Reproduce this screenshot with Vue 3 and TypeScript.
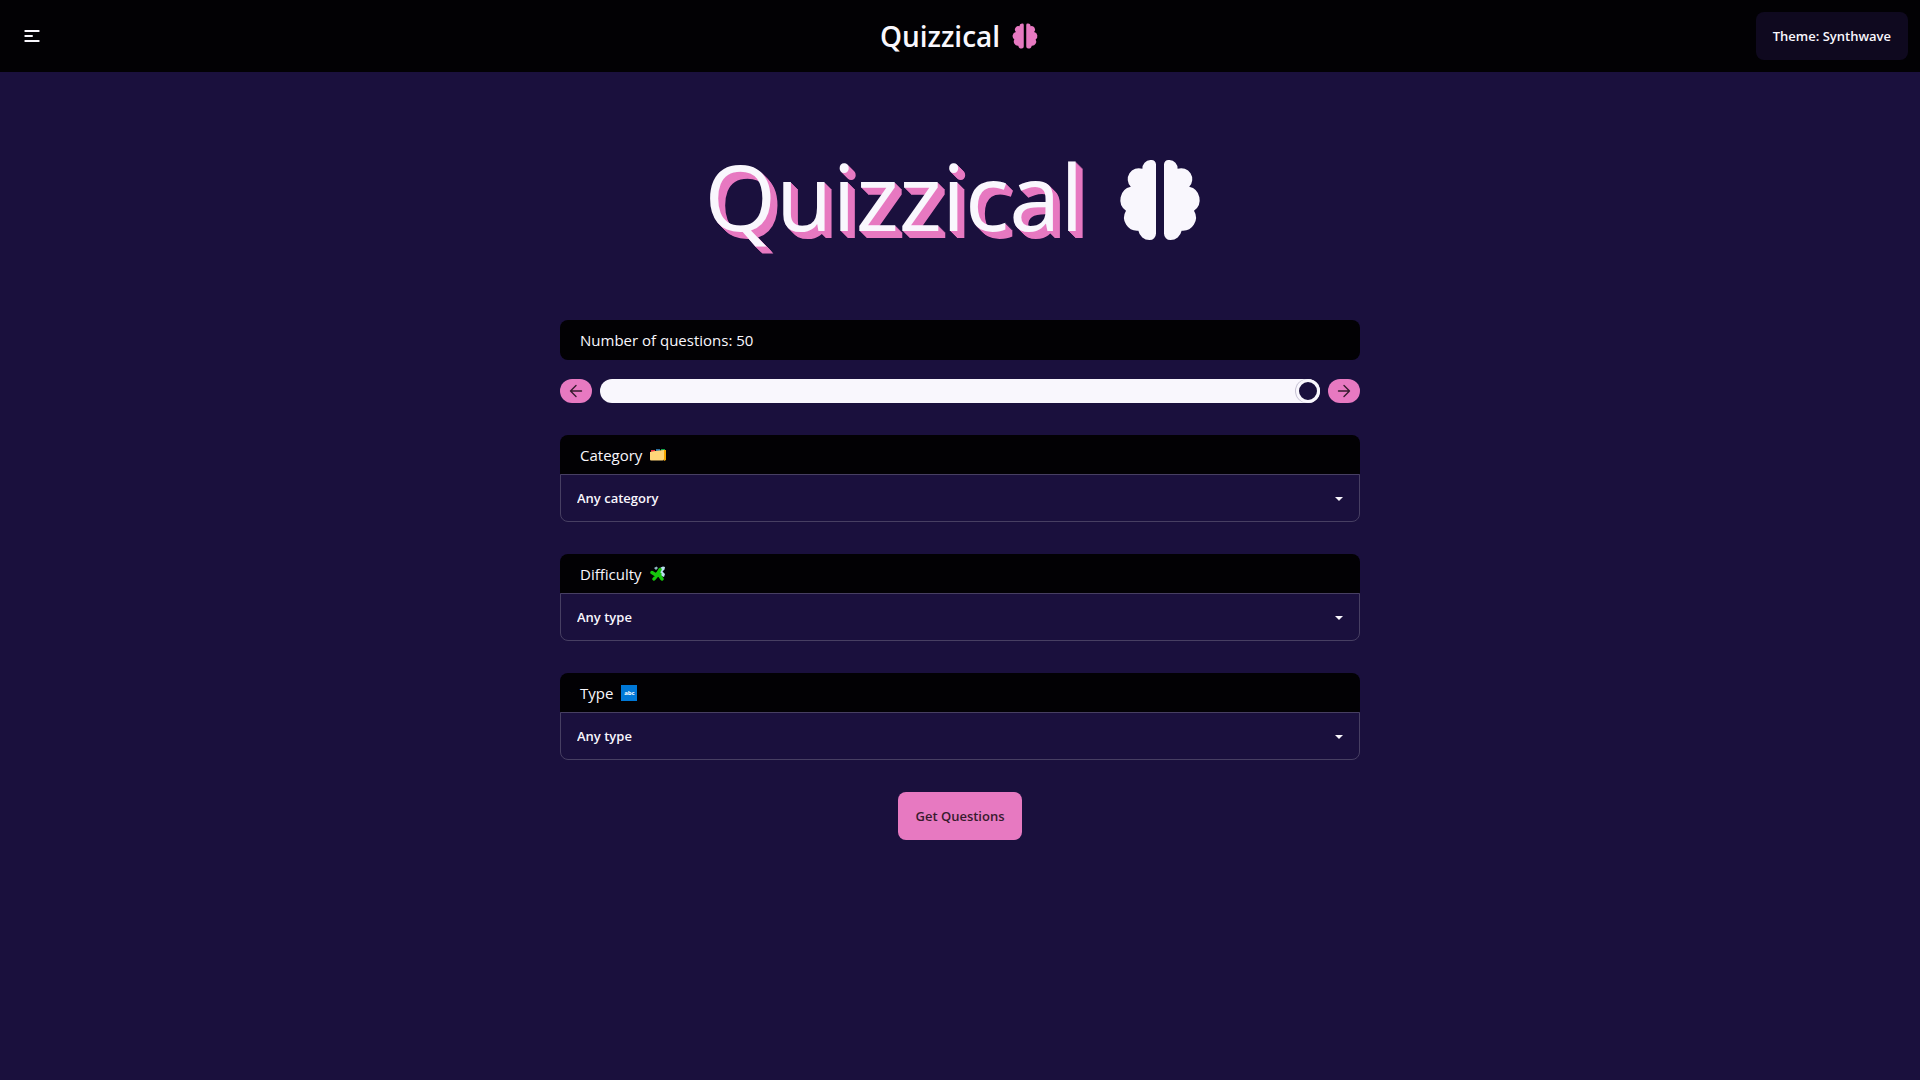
<script setup lang="ts">
import { ref } from 'vue'

interface Field {
  id: string
  label: string
  icon: 'folder' | 'puzzle' | 'abc'
  placeholder: string
  options: string[]
}

const amount = ref(50)

const fields: Field[] = [
  { id: 'category', label: 'Category', icon: 'folder', placeholder: 'Any category', options: ['General Knowledge', 'History', 'Geography'] },
  { id: 'difficulty', label: 'Difficulty', icon: 'puzzle', placeholder: 'Any type', options: ['Easy', 'Medium', 'Hard'] },
  { id: 'type', label: 'Type', icon: 'abc', placeholder: 'Any type', options: ['Multiple choice', 'True / False'] },
]

const selected = ref<Record<string, string>>({ category: '', difficulty: '', type: '' })

const brainHalf =
  'M11 3.1A1.1 1.1 0 0 0 9.9 2H9.6A2.1 2.1 0 0 0 7.6 4.2A2.75 2.75 0 0 0 4.7 8.7A3.35 3.35 0 0 0 3.5 14.7A3.3 3.3 0 0 0 6.6 19.7A2.8 2.8 0 0 0 9.4 22A1.6 1.6 0 0 0 11 20.4Z'

function step(delta: number) {
  amount.value = Math.min(50, Math.max(1, amount.value + delta))
}
</script>

<template>
  <div class="page">
    <header class="navbar">
      <div class="nav-side">
        <button class="menu" type="button" aria-label="Menu">
          <svg width="20" height="20" viewBox="0 0 20 20" fill="none" stroke="currentColor" stroke-width="2" stroke-linecap="round">
            <path d="M3.300 5H16.700M3.300 10H10M3.300 15H16.700" />
          </svg>
        </button>
      </div>
      <a class="brand" href="#">
        <span>Quizzical</span>
        <svg class="brand-icon" viewBox="0 0 24 24" fill="currentColor" aria-hidden="true">
          <path :d="brainHalf" />
          <path :d="brainHalf" transform="matrix(-1 0 0 1 24 0)" />
        </svg>
      </a>
      <div class="nav-side end">
        <button class="theme" type="button">Theme: Synthwave</button>
      </div>
    </header>

    <main class="content">
      <h1 class="hero">
        <span class="hero-text">Quizzical</span>
        <svg class="hero-icon" viewBox="0 0 24 24" fill="currentColor" aria-hidden="true">
          <path :d="brainHalf" />
          <path :d="brainHalf" transform="matrix(-1 0 0 1 24 0)" />
        </svg>
      </h1>

      <form class="form" @submit.prevent>
        <div class="amount">
          <label class="heading rounded" for="amount">Number of questions: {{ amount }}</label>
          <div class="slider">
            <button class="step" type="button" aria-label="Fewer questions" @click="step(-1)">
              <svg width="16" height="16" viewBox="0 0 16 16" fill="none" stroke="currentColor" stroke-width="1.4" stroke-linecap="round" stroke-linejoin="round">
                <path d="M13.500 8H2.500M8 2.500L2.500 8L8 13.500" />
              </svg>
            </button>
            <input id="amount" v-model.number="amount" class="range" type="range" min="1" max="50" />
            <button class="step" type="button" aria-label="More questions" @click="step(1)">
              <svg width="16" height="16" viewBox="0 0 16 16" fill="none" stroke="currentColor" stroke-width="1.4" stroke-linecap="round" stroke-linejoin="round">
                <path d="M2.500 8H13.500M8 2.500L13.500 8L8 13.500" />
              </svg>
            </button>
          </div>
        </div>

        <div v-for="field in fields" :key="field.id" class="field">
          <label class="heading" :for="field.id">
            <span>{{ field.label }}</span>
            <svg v-if="field.icon === 'folder'" class="emoji" viewBox="0 0 16 16" aria-hidden="true">
              <path d="M1 3h4v2H1z" fill="#e8343f" />
              <path d="M6 2h4v3H6z" fill="#2a6f9e" />
              <path d="M11 2h4v3h-4z" fill="#16a34a" />
              <path d="M13 3h3v10l-2 1z" fill="#f5a800" />
              <path d="M0 5l5-1l9-1v9q0 1.500-1.500 1.500H1q-1 0-1-1z" fill="#ffd679" />
            </svg>
            <svg v-else-if="field.icon === 'puzzle'" class="emoji" viewBox="0 0 16 16" aria-hidden="true">
              <path d="M4 2L6.500 0.500L8 2L6 4z" fill="#8fb5c4" />
              <path d="M9 6L11 4L10.500 1.500L13 0.500L15 1L14.500 3.500L12.500 5.500L15 8L14 11L11.500 10z" fill="#b9ddf0" />
              <path d="M5 7.500L8.500 4.500L12 8L8.500 11L6.500 11L4.500 9.500z" fill="#16c60c" />
              <path d="M2 6.500L6 9M10 3.500L8 7M4 13L7 9.500M12 13L9.500 9.500" stroke="#16c60c" stroke-width="3.400" stroke-linecap="round" />
            </svg>
            <span v-else class="abc" aria-hidden="true">abc</span>
          </label>
          <div class="select-box">
            <select :id="field.id" v-model="selected[field.id]" class="select">
              <option value="">{{ field.placeholder }}</option>
              <option v-for="option in field.options" :key="option" :value="option">{{ option }}</option>
            </select>
            <svg class="caret" width="8" height="4" viewBox="0 0 8 4" aria-hidden="true">
              <path d="M0 0h8L4 4z" fill="currentColor" />
            </svg>
          </div>
        </div>

        <button class="submit" type="submit">Get Questions</button>
      </form>
    </main>
  </div>
</template>

<style>
body {
  background: #1a103d;
}
</style>

<style scoped>
.page {
  min-height: 100vh;
  background: #1a103d;
  color: #f9f7fd;
  font-family: "Segoe UI", "Open Sans", sans-serif;
  font-size: 15px;
  line-height: 24px;
}

.page *,
.page *::before {
  box-sizing: border-box;
}

button,
select {
  border: 0;
  font-family: inherit;
  font-size: 13px;
  font-weight: 600;
  color: inherit;
}

button {
  display: flex;
  align-items: center;
  justify-content: center;
  cursor: pointer;
}

.navbar {
  display: flex;
  align-items: center;
  padding: 12px;
  background: #020104;
}

.nav-side {
  flex: 1;
  display: flex;
}

.nav-side.end {
  justify-content: flex-end;
}

.menu {
  width: 40px;
  height: 40px;
  padding: 0;
  background: transparent;
}

.brand {
  display: flex;
  align-items: center;
  gap: 10px;
  color: inherit;
  font-size: 28px;
  font-weight: 600;
  line-height: 36px;
  text-decoration: none;
}

.brand-icon {
  width: 30px;
  height: 30px;
  color: #e779c1;
}

.theme {
  height: 48px;
  padding: 0 17px;
  border-radius: 8px;
  background: #0f091f;
}

.content {
  padding: 72px 16px 0;
}

.hero {
  display: flex;
  align-items: center;
  justify-content: center;
  gap: 28px;
  margin: 0 8px 64px 0;
  font-size: 92px;
  font-weight: 400;
  line-height: 104px;
  text-shadow:
    1px 1px #e779c1,
    2px 2px #e779c1,
    3px 3px #e779c1,
    4px 4px #e779c1,
    5px 5px #e779c1,
    6px 6px #e779c1,
    7px 7px #e779c1;
}

.hero-text {
  padding-bottom: 8px;
}

.hero-icon {
  width: 96px;
  height: 96px;
}

.form {
  display: flex;
  flex-direction: column;
  gap: 32px;
  max-width: 800px;
  margin: 0 auto;
}

.amount {
  display: flex;
  flex-direction: column;
  gap: 19px;
}

.heading {
  display: flex;
  align-items: center;
  gap: 8px;
  height: 39px;
  padding: 0 20px;
  border-radius: 8px 8px 0 0;
  background: #020104;
}

.rounded {
  height: 40px;
  border-radius: 8px;
}

.slider {
  display: flex;
  gap: 8px;
}

.step {
  width: 32px;
  height: 24px;
  padding: 0;
  border-radius: 12px;
  background: #e779c1;
  color: #371b2e;
}

.range {
  flex: 1;
  min-width: 0;
  height: 24px;
  margin: 0;
  appearance: none;
  border-radius: 12px;
  background: #f9f7fd;
  cursor: pointer;
}

.range::-webkit-slider-thumb {
  appearance: none;
  width: 24px;
  height: 24px;
  border: 3px solid #f9f7fd;
  border-radius: 12px;
  background: #1a103d;
  box-shadow: -1px 0 #c5c1d2;
}

.emoji {
  width: 16px;
  height: 16px;
}

.abc {
  width: 16px;
  height: 16px;
  background: #0078d7;
  color: #ffffff;
  font-size: 6px;
  font-weight: 700;
  line-height: 16px;
  text-align: center;
}

.select-box {
  display: grid;
  align-items: center;
}

.select {
  grid-area: 1 / 1;
  width: 100%;
  height: 48px;
  padding: 0 40px 0 16px;
  appearance: none;
  border: 1px solid #473f62;
  border-radius: 0 0 8px 8px;
  background: transparent;
}

.select option {
  background: #1a103d;
}

.caret {
  grid-area: 1 / 1;
  justify-self: end;
  margin: 2px 17px 0 0;
  pointer-events: none;
}

.submit {
  align-self: center;
  height: 48px;
  padding: 0 17px;
  border-radius: 8px;
  background: #e779c1;
  color: #371b2e;
}
</style>
